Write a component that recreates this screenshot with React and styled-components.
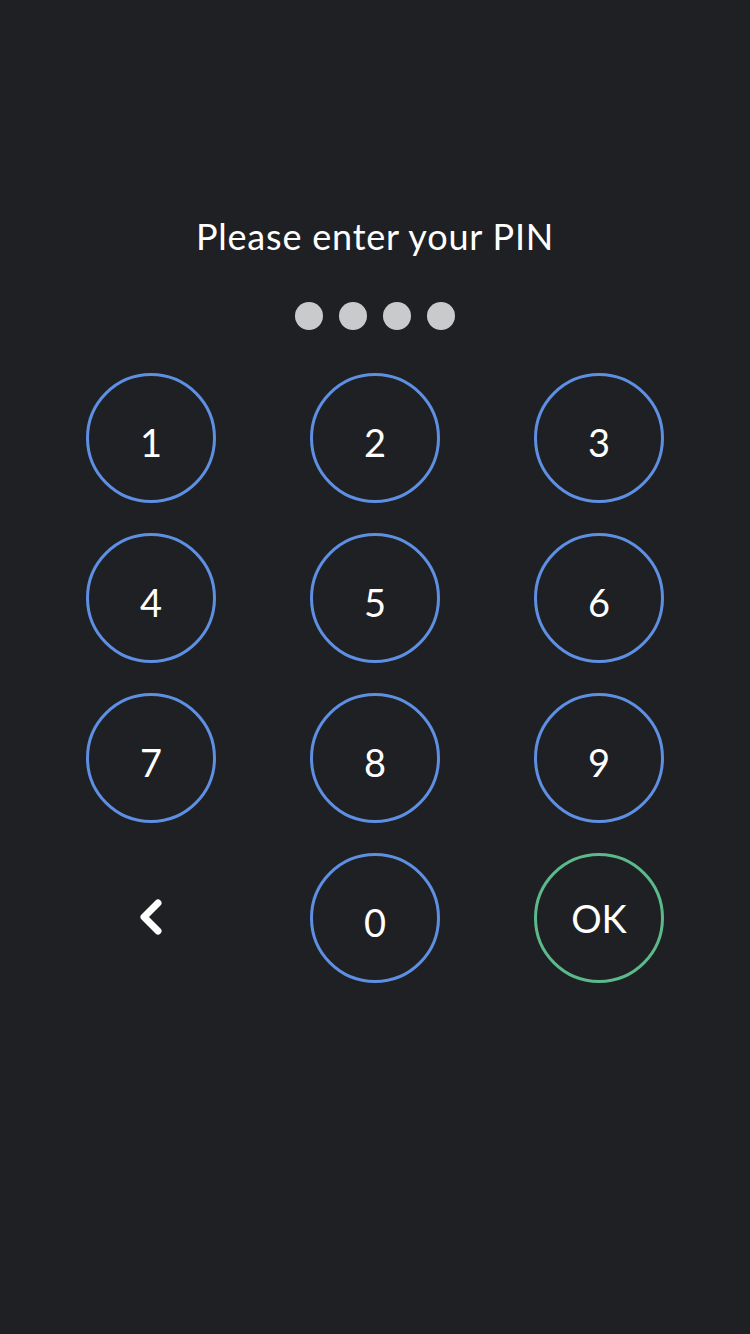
import React from "react";
import styled, { createGlobalStyle } from "styled-components";

const Global = createGlobalStyle`
  html, body { margin: 0; padding: 0; background: #1f2024; }
  #root { min-height: 1334px; }
`;

const Screen = styled.div`
  width: 750px;
  height: 1334px;
  background: #1f2024;
  display: flex;
  flex-direction: column;
  align-items: center;
  padding-top: 216px;
  box-sizing: border-box;
  font-family: Lato, "Open Sans", sans-serif;
`;

const Title = styled.div`
  color: #ffffff;
  font-size: 36px;
  line-height: 40px;
  height: 40px;
  letter-spacing: 0.8px;
`;

const Dots = styled.div`
  display: flex;
  gap: 16px;
  margin-top: 46px;
`;

const Dot = styled.span`
  width: 28px;
  height: 28px;
  border-radius: 50%;
  background: ${(p) => (p.$filled ? "#c9cacc" : "transparent")};
  border: ${(p) => (p.$filled ? "none" : "2px solid #c9cacc")};
  box-sizing: border-box;
`;

const Pad = styled.div`
  display: grid;
  grid-template-columns: repeat(3, 130px);
  grid-auto-rows: 130px;
  column-gap: 94px;
  row-gap: 30px;
  margin-top: 43px;
`;

const Key = styled.button`
  width: 130px;
  height: 130px;
  border-radius: 50%;
  border: 3px solid ${(p) => (p.$ok ? "#5cb98b" : "#5d8fe2")};
  background: transparent;
  color: #ffffff;
  font-family: Lato, "Open Sans", sans-serif;
  font-size: 38px;
  padding: ${(p) => (p.$ok ? "0" : "8px 0 0")};
  box-sizing: border-box;
  display: flex;
  align-items: center;
  justify-content: center;
  cursor: pointer;
`;

const Back = styled.button`
  width: 130px;
  height: 130px;
  border: none;
  background: transparent;
  display: flex;
  align-items: center;
  justify-content: center;
  padding: 0;
  cursor: pointer;
`;

const keys = ["1", "2", "3", "4", "5", "6", "7", "8", "9"];

export default function App() {
  return (
    <>
      <Global />
      <Screen>
        <Title>Please enter your PIN</Title>
        <Dots>
          {[0, 1, 2, 3].map((i) => (
            <Dot key={i} $filled />
          ))}
        </Dots>
        <Pad>
          {keys.map((k) => (
            <Key key={k}>{k}</Key>
          ))}
          <Back aria-label="Back">
            <svg width="30" height="40" viewBox="0 0 30 40">
              <path
                d="M22 5 L8 19 L22 33"
                fill="none"
                stroke="#ffffff"
                strokeWidth="7"
                strokeLinecap="round"
                strokeLinejoin="round"
              />
            </svg>
          </Back>
          <Key>0</Key>
          <Key $ok>OK</Key>
        </Pad>
      </Screen>
    </>
  );
}
